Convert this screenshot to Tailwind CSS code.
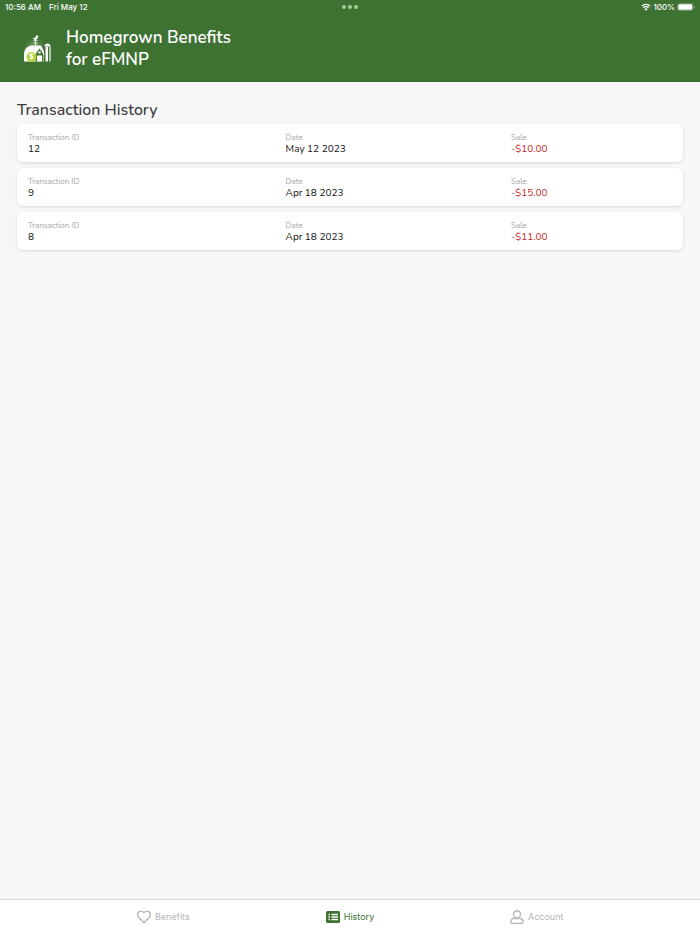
<!doctype html>
<html lang="en" dir="ltr">
  <head>
    <meta charset="UTF-8" />
    <title>Transaction History</title>
    <meta name="viewport" content="width=device-width, initial-scale=1.0" />
    <script src="https://cdn.jsdelivr.net/npm/@tailwindcss/browser@4"></script>
  </head>
  <body class="bg-[#f7f7f7] flex flex-col min-h-screen font-['Nunito','Open_Sans',sans-serif] text-[#111]">
    <header class="bg-[#3e7233] text-white pb-[11px]">
      <!-- Status bar -->
      <div class="grid grid-cols-3 items-center h-3.5 px-[5px] font-['Inter',sans-serif] text-[8px] font-medium">
        <div class="flex gap-2">
          <span>10:56 AM</span>
          <span>Fri May 12</span>
        </div>
        <div class="flex justify-center gap-0.5">
          <span class="size-1 rounded-full bg-[#a5cd9b]"></span>
          <span class="size-1 rounded-full bg-[#a5cd9b]"></span>
          <span class="size-1 rounded-full bg-[#a5cd9b]"></span>
        </div>
        <div class="flex items-center justify-end gap-0.5">
          <svg class="w-2.5 h-2" viewBox="0 0 20 16" fill="none" stroke="currentColor" stroke-width="2.6">
            <path d="M1.5 6.2a12 12 0 0 1 17 0M4.8 9.6a7.4 7.4 0 0 1 10.4 0" />
            <path d="M10 15.5 6.8 12a4.6 4.6 0 0 1 6.4 0z" fill="currentColor" stroke="none" />
          </svg>
          <span>100%</span>
          <svg class="w-[18px] h-2" viewBox="0 0 36 16">
            <rect x="1" y="1" width="31" height="14" rx="4" fill="none" stroke="#86a87f" stroke-width="1.2" />
            <rect x="2.5" y="2.5" width="28" height="11" rx="2.6" fill="#fff" />
            <path d="M33.5 5.5c2 .8 2 4.2 0 5z" fill="#a5c29f" />
          </svg>
        </div>
      </div>

      <div class="flex items-center gap-3.5 pl-5 pt-3">
        <svg class="size-8" viewBox="0 0 64 64">
          <defs>
            <radialGradient id="glow">
              <stop offset="0" stop-color="#a3c58f" stop-opacity="0.75" />
              <stop offset="1" stop-color="#3e7233" stop-opacity="0" />
            </radialGradient>
          </defs>
          <circle cx="29" cy="27" r="24" fill="url(#glow)" />
          <!-- Weather vane -->
          <path d="M31 8v18M27 15h8M27 20h8" stroke="#e3eede" stroke-width="1.8" />
          <path d="M26 9c2 2 4 2 5-1l3-4 3 2-2 4c0 4-7 5-9 1z" fill="#fff" />
          <!-- Barn -->
          <path d="M8 57V43c0-10 6-17 15-18h19l6 12v20z" fill="#fff" />
          <path d="M31 57V42l8-11 8 11v15z" fill="#3e7233" />
          <path d="M30 44l3-9 6-6 6 6 3 9" fill="none" stroke="#fff" stroke-width="2" />
          <path d="M34 45h10v12H34z" fill="#fff" />
          <circle cx="39" cy="39" r="2.6" fill="#dce8d8" />
          <!-- Silo -->
          <path d="M49 27c0-8 12-8 12 0z" fill="#fff" />
          <path d="M51 28h5v29h-5z" fill="#fff" />
          <path d="M60 27v30" stroke="#fff" stroke-width="2.4" />
          <circle cx="23" cy="48" r="10" fill="#b3d334" />
          <text x="23" y="54" text-anchor="middle" class="font-['Open_Sans',sans-serif] text-[17px] font-bold" fill="#fff">$</text>
        </svg>
        <p class="text-[17px] leading-[22px] font-semibold pt-px">Homegrown Benefits<br />for eFMNP</p>
      </div>
    </header>

    <main class="flex-1 px-[17px] pt-4">
      <h1 class="text-base leading-6 font-medium text-[#3c3c3c] mb-0.5">Transaction History</h1>
      <ul class="flex flex-col gap-1.5">
        <li class="bg-white rounded-md shadow-[0_1px_3px_rgba(0,0,0,0.12)] px-[11px] pt-2 pb-[7px]">
          <dl class="grid grid-cols-[40%_35%_25%] text-[10px] leading-3">
            <div>
              <dt class="text-[8px] leading-[11px] text-[#a3a3a3]">Transaction ID</dt>
              <dd>12</dd>
            </div>
            <div>
              <dt class="text-[8px] leading-[11px] text-[#a3a3a3]">Date</dt>
              <dd>May 12 2023</dd>
            </div>
            <div>
              <dt class="text-[8px] leading-[11px] text-[#a3a3a3]">Sale</dt>
              <dd class="text-[#c62828]">-$10.00</dd>
            </div>
          </dl>
        </li>
        <li class="bg-white rounded-md shadow-[0_1px_3px_rgba(0,0,0,0.12)] px-[11px] pt-2 pb-[7px]">
          <dl class="grid grid-cols-[40%_35%_25%] text-[10px] leading-3">
            <div>
              <dt class="text-[8px] leading-[11px] text-[#a3a3a3]">Transaction ID</dt>
              <dd>9</dd>
            </div>
            <div>
              <dt class="text-[8px] leading-[11px] text-[#a3a3a3]">Date</dt>
              <dd>Apr 18 2023</dd>
            </div>
            <div>
              <dt class="text-[8px] leading-[11px] text-[#a3a3a3]">Sale</dt>
              <dd class="text-[#c62828]">-$15.00</dd>
            </div>
          </dl>
        </li>
        <li class="bg-white rounded-md shadow-[0_1px_3px_rgba(0,0,0,0.12)] px-[11px] pt-2 pb-[7px]">
          <dl class="grid grid-cols-[40%_35%_25%] text-[10px] leading-3">
            <div>
              <dt class="text-[8px] leading-[11px] text-[#a3a3a3]">Transaction ID</dt>
              <dd>8</dd>
            </div>
            <div>
              <dt class="text-[8px] leading-[11px] text-[#a3a3a3]">Date</dt>
              <dd>Apr 18 2023</dd>
            </div>
            <div>
              <dt class="text-[8px] leading-[11px] text-[#a3a3a3]">Sale</dt>
              <dd class="text-[#c62828]">-$11.00</dd>
            </div>
          </dl>
        </li>
      </ul>
    </main>

    <nav class="grid grid-cols-3 px-[10%] h-[35px] bg-white border-t border-[#d8d8d8] font-['Inter',sans-serif] text-[9px] text-[#b5b5b5]">
      <a href="#benefits" class="flex items-center justify-center gap-1">
        <svg class="size-3.5" viewBox="0 0 28 28" fill="none" stroke="currentColor" stroke-width="2.8" stroke-linejoin="round">
          <path d="M14 25.5 3.4 14.6C.2 11.2.4 6 4 3.6c3.2-2.2 7-1.4 10 2 3-3.4 6.8-4.2 10-2 3.6 2.4 3.8 7.6.6 11z" />
        </svg>
        Benefits
      </a>
      <a href="#history" aria-current="page" class="flex items-center justify-center gap-1 text-[#3e7233]">
        <svg class="size-3.5" viewBox="0 0 28 28">
          <rect x="0" y="2" width="28" height="24" rx="3" fill="currentColor" />
          <path d="M5 9h3M11 9h13M5 14h3M11 14h13M5 19h3M11 19h13" stroke="#fff" stroke-width="2.6" />
        </svg>
        History
      </a>
      <a href="#account" class="flex items-center justify-center gap-1">
        <svg class="size-3.5" viewBox="0 0 28 28" fill="none" stroke="currentColor" stroke-width="2.6" stroke-linejoin="round">
          <circle cx="14" cy="8.5" r="7" />
          <path d="M8.5 16.5c3.5 1.6 7.5 1.6 11 0 4 .5 6.500 3.500 6.500 6.500v1.500c0 1.400-.8 2.200-2.200 2.200H4.200C2.800 26.700 2 25.900 2 24.500V23c0-3 2.500-6 6.500-6.500z" />
        </svg>
        Account
      </a>
    </nav>
  </body>
</html>
